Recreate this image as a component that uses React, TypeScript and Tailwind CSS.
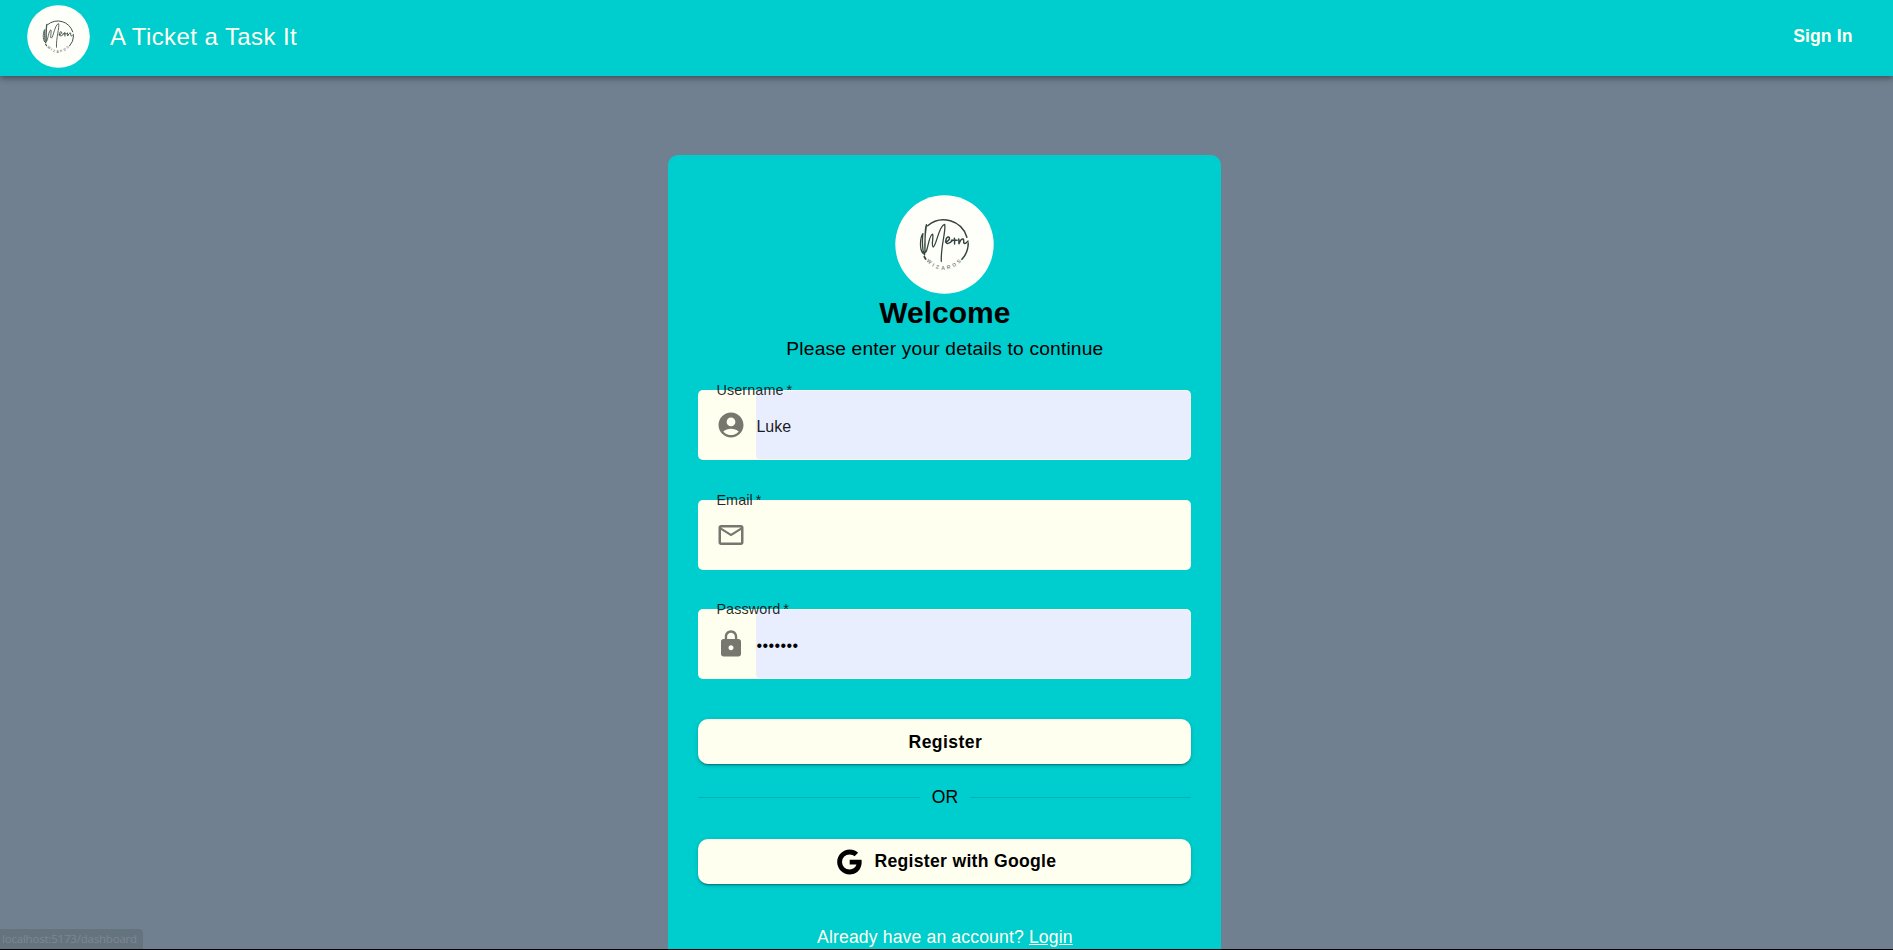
import type { ReactNode } from "react";

function Logo({ className }: { className: string }) {
  return (
    <svg viewBox="0 0 100 100" className={className} aria-hidden="true">
      <circle cx="50" cy="50" r="49.7" fill="#fffffa" />
      <g fill="none" stroke="#34453f" strokeLinecap="round" strokeLinejoin="round">
        <path d="M33 31A24.6 24.6 0 0 1 72.6 42.6" strokeWidth="1.5" />
        <path d="M74 48.6A24.6 24.6 0 0 1 67.6 65" strokeWidth="1.5" />
        <path d="M31 64.6L29.6 62.4" strokeWidth="1.8" />
        <path
          d="M28 58.6C24.6 54.6 25.4 42.6 28.2 39C27.4 46 27.6 57 29.8 60.6C31.2 54 29.2 34 31.8 30C30.6 38 29.8 50 30.4 57.6C32.6 60 34.4 39 38 39.6C39.2 43 36.2 51.6 38.6 52.6C42.2 50.4 44.2 30.6 50.2 29.6C51.8 36 46 52 46.8 67"
          strokeWidth="1.3"
        />
        <path d="M51 47.4C54.4 47 56.2 43.2 54.2 42.4C51.4 42 50 48.6 53 49C55.2 49.2 56.8 47.4 58 46" strokeWidth="1.5" />
        <path d="M57 45.8H62.8M60 43.6C60.4 45.6 60 47.6 60.2 49.4" strokeWidth="1.5" />
        <path d="M64.4 44.4C64.8 46 64.4 48 64.6 49.2C65.4 47 67.4 44 69 44.4C70 45.4 68.4 49 70.6 49C72 48.6 72.6 47.4 73.8 46.6" strokeWidth="1.5" />
      </g>
      <g
        fill="#7d8683"
        fontFamily="Liberation Sans, sans-serif"
        fontSize="5.2"
        fontWeight="bold"
        textAnchor="middle"
      >
        <text transform="translate(33.4 68.6) rotate(42)">W</text>
        <text transform="translate(37.8 72.2) rotate(28)">I</text>
        <text transform="translate(42.4 74.4) rotate(14)">Z</text>
        <text transform="translate(48.6 75.4)">A</text>
        <text transform="translate(54.6 74.6) rotate(-14)">R</text>
        <text transform="translate(60.6 72) rotate(-30)">D</text>
        <text transform="translate(65.6 68.2) rotate(-44)">S</text>
      </g>
    </svg>
  );
}

function Glyph({ d, className }: { d: string; className: string }) {
  return (
    <svg viewBox="0 0 24 24" className={className} fill="currentColor" aria-hidden="true">
      <path d={d} />
    </svg>
  );
}

const icons = {
  user: "M12 2C6.48 2 2 6.48 2 12s4.48 10 10 10 10-4.48 10-10S17.52 2 12 2m0 4c1.93 0 3.5 1.57 3.5 3.5S13.93 13 12 13s-3.5-1.57-3.5-3.5S10.07 6 12 6m0 14c-2.03 0-4.43-.82-6.14-2.88C7.55 15.8 9.68 15 12 15s4.45.8 6.14 2.12C16.43 19.18 14.03 20 12 20",
  mail: "M22 6c0-1.1-.9-2-2-2H4c-1.1 0-2 .9-2 2v12c0 1.1.9 2 2 2h16c1.1 0 2-.9 2-2zm-2 0-8 5-8-5zm0 12H4V8l8 5 8-5z",
  lock: "M18 8h-1V6c0-2.76-2.24-5-5-5S7 3.24 7 6v2H6c-1.1 0-2 .9-2 2v10c0 1.1.9 2 2 2h12c1.1 0 2-.9 2-2V10c0-1.1-.9-2-2-2m-6 9c-1.1 0-2-.9-2-2s.9-2 2-2 2 .9 2 2-.9 2-2 2m3.1-9H8.9V6c0-1.71 1.39-3.1 3.1-3.1s3.1 1.39 3.1 3.1z",
  google:
    "M12.545 10.239v3.821h5.445c-.712 2.315-2.647 3.972-5.445 3.972a6.033 6.033 0 110-12.064c1.498 0 2.866.549 3.921 1.453l2.814-2.814A9.969 9.969 0 0012.545 2C7.021 2 2.543 6.477 2.543 12s4.478 10 10.002 10c8.396 0 10.249-7.85 9.426-11.748z",
};

function Field({
  label,
  icon,
  filled,
  children,
}: {
  label: string;
  icon: string;
  filled?: boolean;
  children?: ReactNode;
}) {
  return (
    <div className="relative flex h-[70px] rounded-[5px] bg-[#fffff0] p-px">
      <span className="absolute left-[18px] top-[-9px] text-[14.4px] leading-[18px] tracking-[0.1px] text-black/85">
        {label}&thinsp;*
      </span>
      <div className="flex w-[57px] shrink-0 items-center pl-[17px] text-[#777770]">
        <Glyph d={icon} className="size-[30px]" />
      </div>
      <div
        className={
          filled
            ? "flex flex-1 items-center rounded-[4px] bg-[#e8eefd] pt-[3px] text-base text-black/90"
            : "flex flex-1 items-center"
        }
      >
        {children}
      </div>
    </div>
  );
}

function Action({ children, className }: { children: ReactNode; className: string }) {
  return (
    <button
      className={`flex w-full items-center justify-center rounded-[10px] bg-[#fffff0] text-[17.6px] font-bold text-black shadow-[0_3px_1px_-2px_rgba(0,0,0,0.2),0_2px_2px_0_rgba(0,0,0,0.14),0_1px_5px_0_rgba(0,0,0,0.12)] ${className}`}
    >
      {children}
    </button>
  );
}

export default function App() {
  return (
    <div className="relative flex h-[950px] w-full flex-col overflow-hidden border-b border-black bg-[#708090] font-['Liberation_Sans',Arial,sans-serif]">
      <header className="z-10 flex h-[75.5px] shrink-0 items-center bg-[#00cdcd] pb-[3.5px] pl-[26.5px] pr-[40.5px] text-[#fffff0] shadow-[0_2px_4px_-1px_rgba(0,0,0,0.2),0_4px_5px_0_rgba(0,0,0,0.14),0_1px_10px_0_rgba(0,0,0,0.12)]">
        <Logo className="size-[63px]" />
        <h1 className="ml-[20.5px] mt-px text-2xl tracking-[0.42px]">A Ticket a Task It</h1>
        <a className="ml-auto text-[17.6px] font-bold tracking-[0.1px]">Sign In</a>
      </header>

      <main className="ml-[668.4px] mt-[79.5px] flex h-[900px] w-[553px] shrink-0 flex-col rounded-t-[10px] bg-[#00cdcd] px-[30px] pt-[40px]">
        <div className="flex flex-col items-center text-black">
          <Logo className="size-[99px]" />
          <h2 className="text-[30px] font-bold leading-[37px]">Welcome</h2>
          <p className="mt-[2px] text-[19.2px] leading-[32px] tracking-[0.18px]">
            Please enter your details to continue
          </p>
        </div>

        <form className="mt-[25px] flex flex-col gap-[39.5px]">
          <Field label="Username" icon={icons.user} filled>
            Luke
          </Field>
          <Field label="Email" icon={icons.mail} />
          <Field label="Password" icon={icons.lock} filled>
            <span className="tracking-[0.4px] text-black">•••••••</span>
          </Field>
        </form>

        <Action className="mt-[40px] h-[45px] pl-px pt-px tracking-[0.4px]">Register</Action>

        <div className="mt-[22px] flex h-[22px] items-center gap-[12px] text-[17.6px] text-black">
          <span className="h-px flex-1 bg-black/12" />
          <span className="pt-px">OR</span>
          <span className="h-px flex-1 bg-black/12" />
        </div>

        <Action className="mt-[31px] h-[45px] pl-px tracking-[0.3px]">
          <Glyph d={icons.google} className="mr-[10px] size-[30px]" />
          Register with Google
        </Action>

        <p className="mt-[42px] text-center text-[17.6px] leading-[22px] tracking-[0.14px] text-[#fffff0]">
          Already have an account? <a className="underline">Login</a>
        </p>
      </main>

      <div className="absolute bottom-0 left-0 flex h-[20px] w-[143px] items-center whitespace-nowrap rounded-tr-[4px] bg-[#65737f] pl-[2px] font-['Open_Sans','Noto_Sans',sans-serif] text-[11.5px] tracking-[-0.2px] text-[#7b8793]">
        localhost:5173/dashboard
      </div>
    </div>
  );
}
